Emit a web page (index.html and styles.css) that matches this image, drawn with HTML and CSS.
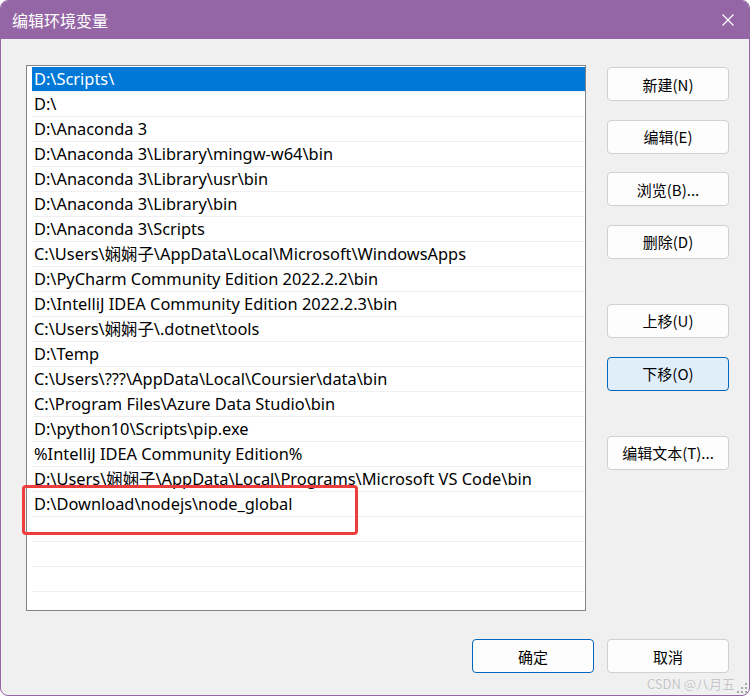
FILE: index.html
```html
<!DOCTYPE html>
<html lang="zh-CN">
<head>
<meta charset="utf-8">
<title>编辑环境变量</title>
<link rel="stylesheet" href="styles.css">
</head>
<body>
<div class="window">
  <div class="titlebar">
    <span class="title">编辑环境变量</span>
    <svg class="close" width="14" height="14" viewBox="0 0 14 14"><path d="M1.5 1.5 L12.5 12.5 M12.5 1.5 L1.5 12.5" stroke="#fff" stroke-width="1.2" fill="none"/></svg>
  </div>
  <div class="content">
    <div class="main">
      <div class="list">
        <div class="row selected">D:\Scripts\</div>
        <div class="row">D:\</div>
        <div class="row">D:\Anaconda 3</div>
        <div class="row">D:\Anaconda 3\Library\mingw-w64\bin</div>
        <div class="row">D:\Anaconda 3\Library\usr\bin</div>
        <div class="row">D:\Anaconda 3\Library\bin</div>
        <div class="row">D:\Anaconda 3\Scripts</div>
        <div class="row">C:\Users\娴娴子\AppData\Local\Microsoft\WindowsApps</div>
        <div class="row">D:\PyCharm Community Edition 2022.2.2\bin</div>
        <div class="row">D:\IntelliJ IDEA Community Edition 2022.2.3\bin</div>
        <div class="row">C:\Users\娴娴子\.dotnet\tools</div>
        <div class="row">D:\Temp</div>
        <div class="row">C:\Users\???\AppData\Local\Coursier\data\bin</div>
        <div class="row">C:\Program Files\Azure Data Studio\bin</div>
        <div class="row">D:\python10\Scripts\pip.exe</div>
        <div class="row">%IntelliJ IDEA Community Edition%</div>
        <div class="row">D:\Users\娴娴子\AppData\Local\Programs\Microsoft VS Code\bin</div>
        <div class="row">D:\Download\nodejs\node_global</div>
        <div class="row"></div>
        <div class="row"></div>
        <div class="row"></div>
        <div class="row"></div>
        <div class="row"></div>
      </div>
      <div class="side">
        <div class="group">
          <button class="btn">新建(N)</button>
          <button class="btn">编辑(E)</button>
          <button class="btn">浏览(B)...</button>
          <button class="btn">删除(D)</button>
        </div>
        <div class="group">
          <button class="btn">上移(U)</button>
          <button class="btn focused">下移(O)</button>
        </div>
        <div class="group">
          <button class="btn">编辑文本(T)...</button>
        </div>
      </div>
    </div>
    <div class="footer">
      <button class="btn default">确定</button>
      <button class="btn">取消</button>
    </div>
  </div>
  <div class="highlight"></div>
  <div class="watermark">CSDN @八月五</div>
  <svg class="grip" width="12" height="12" viewBox="0 0 12 12">
    <rect x="9" y="1" width="2" height="2" fill="#a8a8a8"/>
    <rect x="5" y="5" width="2" height="2" fill="#a8a8a8"/>
    <rect x="9" y="5" width="2" height="2" fill="#a8a8a8"/>
    <rect x="1" y="9" width="2" height="2" fill="#a8a8a8"/>
    <rect x="5" y="9" width="2" height="2" fill="#a8a8a8"/>
    <rect x="9" y="9" width="2" height="2" fill="#a8a8a8"/>
  </svg>
</div>
</body>
</html>
```
FILE: styles.css
```css
* { box-sizing: border-box; }
html, body {
  margin: 0;
  padding: 0;
  background: #ffffff;
}
body {
  width: 752px;
  height: 696px;
  overflow: hidden;
  font-family: "Noto Sans", "Noto Sans CJK SC", sans-serif;
  font-size: 15px;
  color: #000;
}
.window {
  position: relative;
  width: 750px;
  height: 696px;
  border: 1px solid #9566a5;
  border-radius: 8px;
  background: #f0f0f0;
  overflow: hidden;
}
.titlebar {
  height: 38px;
  background: #9566a5;
  display: flex;
  align-items: center;
  justify-content: space-between;
  padding: 0 14px 0 11px;
}
.title {
  color: #ffffff;
  font-family: "Noto Sans CJK SC", sans-serif;
  font-size: 16px;
  line-height: 20px;
}
.close {
  display: block;
}
.content {
  padding: 26px 20px 0 25px;
}
.main {
  display: flex;
  gap: 21px;
}
.list {
  width: 560px;
  height: 546px;
  border: 1px solid #848484;
  background: #ffffff;
  padding: 1px 0 0 5px;
  overflow: hidden;
}
.row {
  height: 25px;
  border-bottom: 1px solid #f0f0f0;
  padding-left: 2px;
  line-height: 24px;
  white-space: nowrap;
  overflow: hidden;
  font-family: "Noto Sans", "Noto Sans CJK SC", sans-serif;
  font-size: 16.4px;
}
.row.selected {
  background: #0078d7;
  color: #ffffff;
}
.side {
  width: 122px;
  padding-top: 2px;
  display: flex;
  flex-direction: column;
  gap: 45px;
}
.group {
  display: flex;
  flex-direction: column;
  gap: 18.67px;
}
.btn {
  width: 122px;
  height: 34px;
  background: #fdfdfd;
  border: 1px solid #d0d0d0;
  border-radius: 4px;
  font-family: "Noto Sans CJK SC", "Noto Sans", sans-serif;
  font-size: 15px;
  color: #000;
  padding: 0;
  margin: 0;
}
.btn.focused {
  background: #e0eef9;
  border-color: #0067c0;
}
.btn.default {
  border-color: #0067c0;
}
.footer {
  display: flex;
  justify-content: flex-end;
  gap: 13px;
  margin-top: 28px;
}
.highlight {
  position: absolute;
  left: 21px;
  top: 484px;
  width: 336px;
  height: 50px;
  border: 3px solid #ee3d3d;
  border-radius: 4px;
}
.watermark {
  position: absolute;
  right: 14px;
  bottom: 2px;
  font-family: "Noto Sans CJK SC", sans-serif;
  font-size: 13px;
  color: #c4c4c4;
  text-shadow: 0 0 1px #ffffff;
  line-height: 18px;
}
.grip {
  position: absolute;
  right: 1px;
  bottom: 1px;
}
```
